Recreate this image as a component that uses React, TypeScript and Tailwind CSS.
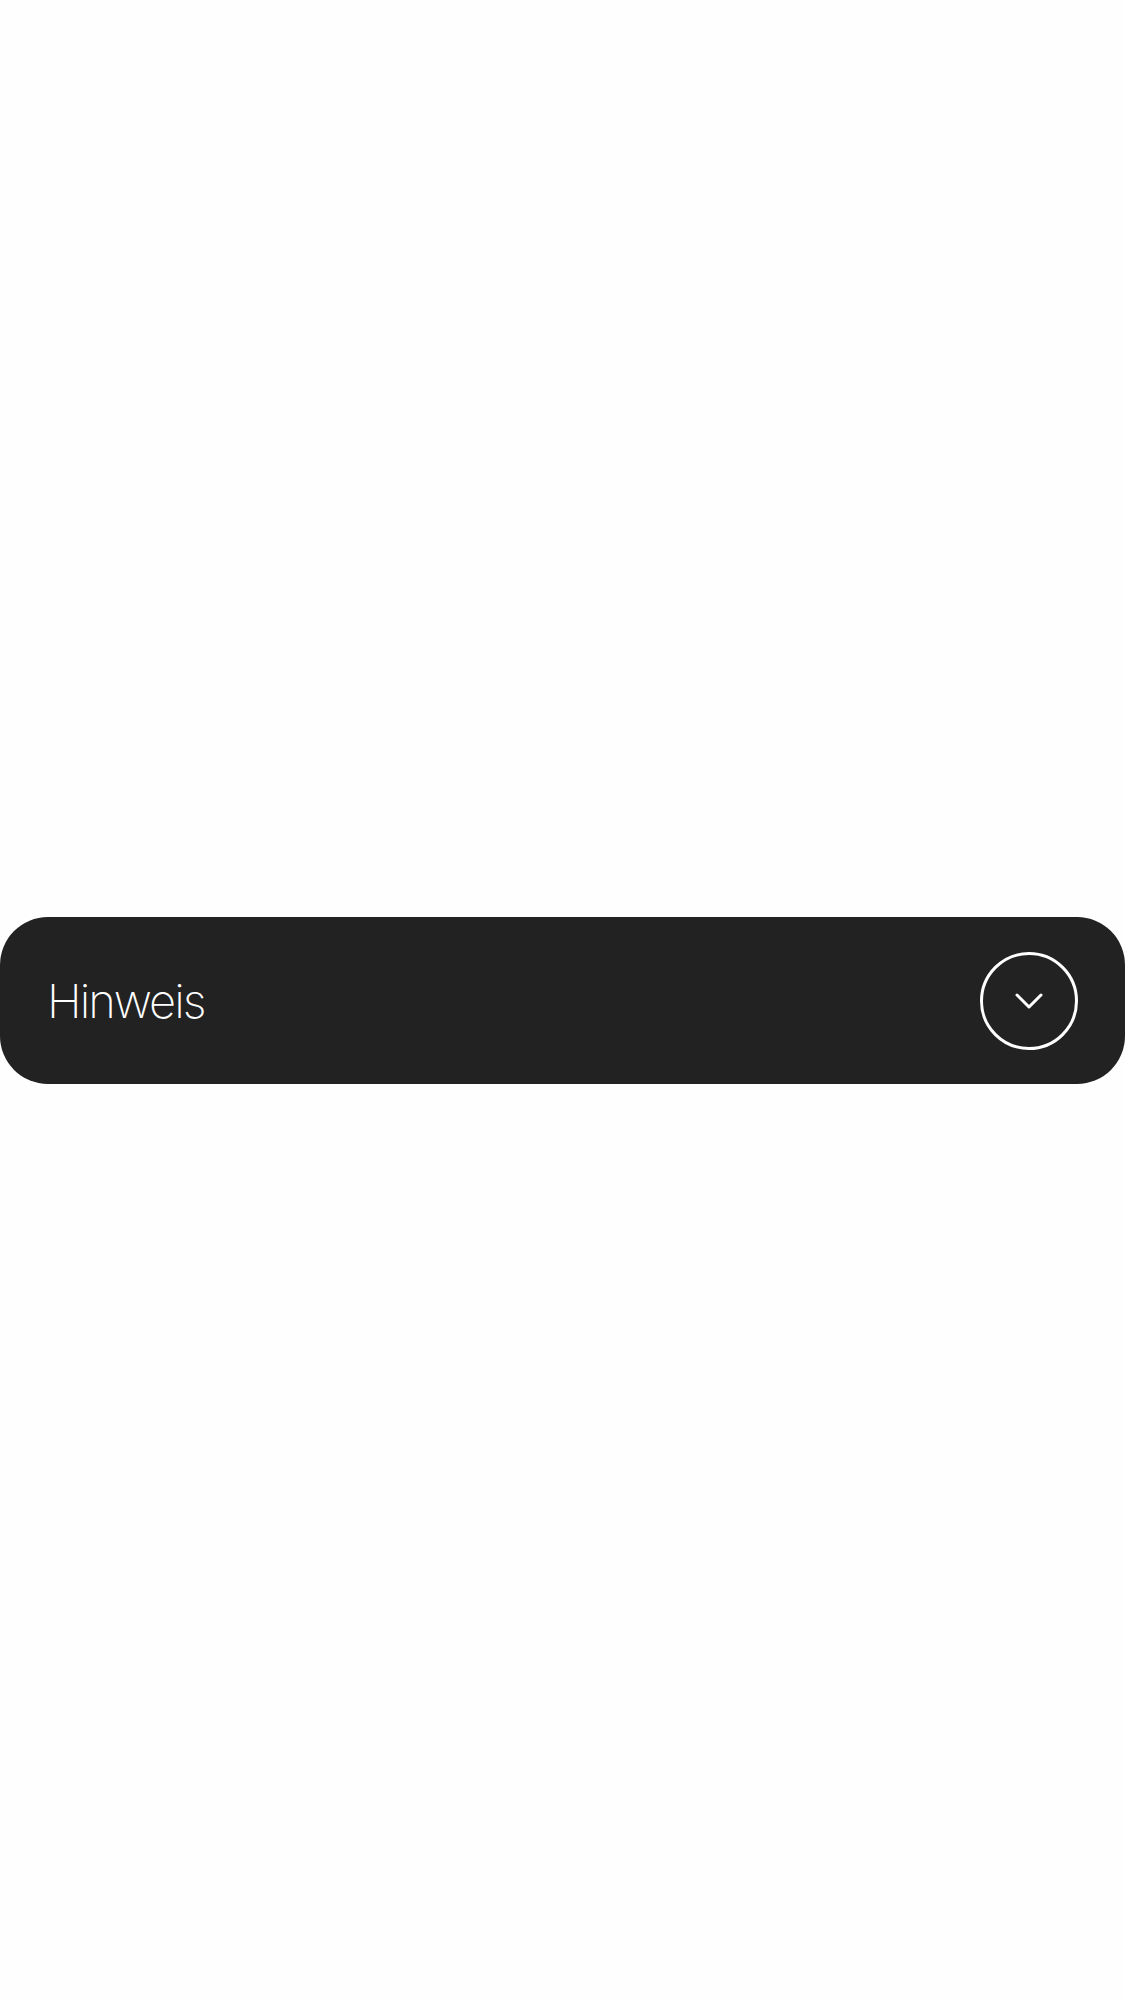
import { ChevronDown } from "lucide-react";

export default function App() {
  return (
    <div className="flex min-h-screen w-full items-center bg-[#fefefe]">
      <div className="flex h-[167px] w-full items-center justify-between rounded-[48px] bg-[#222222] pl-[47px] pr-[47px]">
        <p className="font-['Inter','Liberation_Sans',sans-serif] text-[47px] font-[250] leading-none tracking-[-2px] text-white">
          Hinweis
        </p>
        <button
          type="button"
          className="flex h-[98px] w-[98px] items-center justify-center rounded-full border-[3px] border-white"
        >
          <ChevronDown size={48} strokeWidth={1.5} className="text-white" />
        </button>
      </div>
    </div>
  );
}
